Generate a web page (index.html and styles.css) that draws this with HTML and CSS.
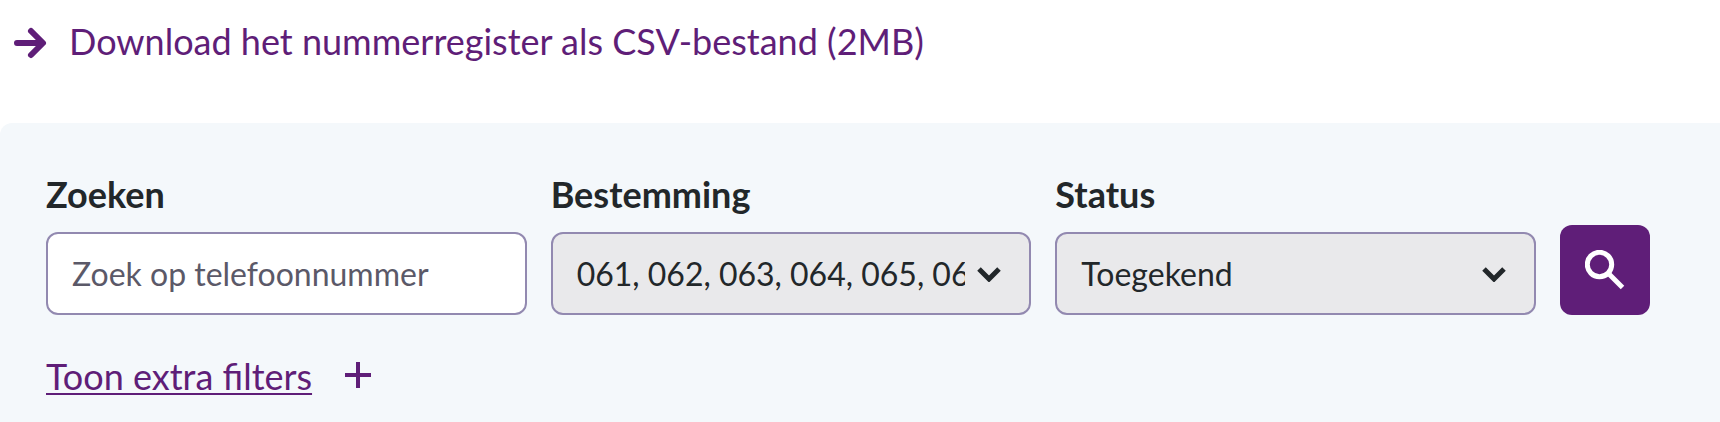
FILE: index.html
```html
<!DOCTYPE html>
<html lang="nl">
<head>
  <meta charset="UTF-8">
  <meta name="viewport" content="width=device-width, initial-scale=1.0">
  <title>Nummerregister</title>
  <link rel="stylesheet" href="styles.css">
</head>
<body>

<a class="download-link" href="#">
  <svg class="icon-arrow" viewBox="0 0 32 32" aria-hidden="true">
    <path d="M3 18H28M17 6L29 18L17 30"/>
  </svg>
  <span>Download het nummerregister als CSV-bestand (2MB)</span>
</a>

<form class="filters">
  <div class="filter-row">
    <!-- Zoeken -->
    <div class="field">
      <label for="zoeken">Zoeken</label>
      <input class="control" type="text" id="zoeken" placeholder="Zoek op telefoonnummer">
    </div>

    <!-- Bestemming -->
    <div class="field">
      <label for="bestemming">Bestemming</label>
      <div class="select-wrap">
        <select class="control" id="bestemming">
          <option>061, 062, 063, 064, 065, 068</option>
        </select>
        <svg class="icon-chevron" viewBox="0 0 24 16" aria-hidden="true">
          <path d="M2 3L12 13L22 3"/>
        </svg>
      </div>
    </div>

    <!-- Status -->
    <div class="field">
      <label for="status">Status</label>
      <div class="select-wrap">
        <select class="control" id="status">
          <option>Toegekend</option>
        </select>
        <svg class="icon-chevron" viewBox="0 0 24 16" aria-hidden="true">
          <path d="M2 3L12 13L22 3"/>
        </svg>
      </div>
    </div>

    <button class="search-btn" type="submit" aria-label="Zoeken">
      <svg class="icon-search" viewBox="0 0 40 40" aria-hidden="true">
        <circle cx="14.5" cy="14.5" r="12.2"/>
        <path d="M24.5 24.5L37.5 37.5"/>
      </svg>
    </button>
  </div>

  <button class="extra-btn" type="button">
    <span>Toon extra filters</span>
    <svg class="icon-plus" viewBox="0 0 28 28" aria-hidden="true">
      <path d="M14 0V26M1 13H27"/>
    </svg>
  </button>
</form>

</body>
</html>
```
FILE: styles.css
```css
* {
  box-sizing: border-box;
}

body {
  margin: 0;
  font-family: Lato, sans-serif;
  font-size: 36px;
  line-height: 44px;
  color: #22272a;
  background: white;
}

svg {
  display: block;
  flex: none;
  fill: none;
  stroke: currentColor;
}

.download-link {
  display: flex;
  align-items: center;
  gap: 23px;
  padding: 19px 14px 60px;
  color: #5f1e78;
  text-decoration: none;
}

.icon-arrow {
  width: 32px;
  height: 32px;
  overflow: visible;
  stroke-width: 6;
  stroke-linecap: round;
  stroke-linejoin: round;
}

.filters {
  padding: 49px 70px 32px 46px;
  border-top-left-radius: 12px;
  background: #f4f8fb;
}

.filter-row {
  display: grid;
  grid-template-columns: repeat(3, minmax(0, 1fr)) 90px;
  gap: 24px;
  align-items: end;
}

.field {
  display: flex;
  flex-direction: column;
  gap: 16px;
}

label {
  font-weight: bold;
}

.control {
  display: block;
  width: 100%;
  height: 83px;
  padding: 0 24px;
  border: 2px solid #9289b0;
  border-radius: 12px;
  background: white;
  color: #22272a;
  font-family: inherit;
  font-size: 32px;
}

.control::placeholder {
  color: #5b5968;
  opacity: 1;
}

.select-wrap {
  position: relative;
}

select.control {
  appearance: none;
  padding-right: 64px;
  background: #e9e9eb;
}

.icon-chevron {
  position: absolute;
  top: 34px;
  right: 30px;
  width: 24px;
  height: 16px;
  stroke-width: 5;
  pointer-events: none;
}

.search-btn {
  display: flex;
  align-items: center;
  justify-content: center;
  width: 90px;
  height: 90px;
  padding: 0;
  border: none;
  border-radius: 12px;
  background: #5f1e78;
  color: white;
  cursor: pointer;
}

.icon-search {
  width: 40px;
  height: 40px;
  stroke-width: 5;
}

.extra-btn {
  display: flex;
  align-items: center;
  gap: 32px;
  margin-top: 39px;
  padding: 0;
  border: none;
  background: none;
  color: #5f1e78;
  font: inherit;
  cursor: pointer;
}

.extra-btn span {
  text-decoration: underline;
  text-decoration-thickness: 2px;
  text-underline-offset: 3px;
}

.icon-plus {
  width: 28px;
  height: 28px;
  stroke-width: 4;
}
```
